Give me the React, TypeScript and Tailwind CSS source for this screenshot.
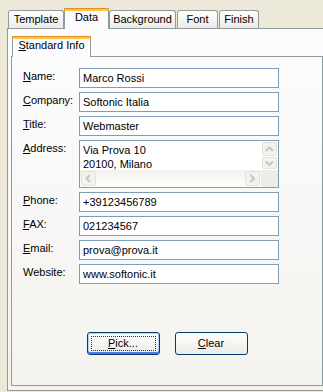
import { ReactNode } from 'react';

function Tab({ label, active, className }: { label: ReactNode; active?: boolean; className: string }) {
  if (active) {
    return (
      <div className={`relative z-10 -mb-px flex h-[21px] flex-col border-x border-[#919B9C] bg-[#FCFCFE] ${className}`}>
        <div className="-mx-px h-[3px] rounded-t-[3px] border-t border-[#E68B2C] bg-[#FFC73C]" />
        <div className="text-center leading-[13px]">{label}</div>
      </div>
    );
  }
  return (
    <div className={`flex h-[18px] items-center justify-center rounded-t-[3px] border border-b-0 border-[#919B9C] bg-linear-to-b from-white to-[#ECEBE6] ${className}`}>
      {label}
    </div>
  );
}

function Field({ label, value }: { label: ReactNode; value: string }) {
  return (
    <div className="flex">
      <div className="w-[56px] pt-[2px]">{label}</div>
      <div className="h-[20px] w-[200px] border border-[#7F9DB9] bg-white pl-[3px] pt-[3px]">{value}</div>
    </div>
  );
}

function Arrow({ dir }: { dir: 'up' | 'down' | 'left' | 'right' }) {
  const pts = {
    up: '1,5 4.5,1.5 8,5',
    down: '1,1.5 4.5,5 8,1.5',
    left: '5,1 1.5,4.5 5,8',
    right: '1.5,1 5,4.5 1.5,8',
  }[dir];
  const vertical = dir === 'up' || dir === 'down';
  return (
    <svg width={vertical ? 9 : 7} height={vertical ? 7 : 9} viewBox={vertical ? '0 0 9 7' : '0 0 7 9'}>
      <polyline points={pts} fill="none" stroke="#C4C6CB" strokeWidth="2" />
    </svg>
  );
}

function ScrollBtn({ dir, className }: { dir: 'up' | 'down' | 'left' | 'right'; className: string }) {
  return (
    <div className={`flex items-center justify-center rounded-[2px] border border-[#E4E2DA] bg-[#F3F2EC] ${className}`}>
      <Arrow dir={dir} />
    </div>
  );
}

function Key({ children }: { children: ReactNode }) {
  return <span className="underline underline-offset-[1px]">{children}</span>;
}

export default function App() {
  return (
    <div className="relative h-[392px] w-[323px] overflow-hidden bg-[#ECE9D8] font-['Liberation_Sans',Arial,sans-serif] text-[11px] leading-[13px] text-black">
      <div className="flex h-[28px] items-end pl-[8px]">
        <Tab label="Template" className="w-[56px]" />
        <Tab label="Data" active className="w-[45px]" />
        <Tab label="Background" className="w-[67px]" />
        <Tab label="Font" className="ml-[1px] w-[41px]" />
        <Tab label="Finish" className="ml-[1px] w-[40px]" />
      </div>

      <div className="ml-[7px] h-[363px] w-[330px] border border-[#919B9C] bg-linear-to-b from-[#FCFCFE] to-[#F4F3EE] pl-[3px] pt-[7px]">
        <div className="flex h-[20px] items-end pl-[1px]">
          <Tab label={<><Key>S</Key>tandard Info</>} active className="w-[79px]" />
        </div>

        <div className="flex h-[330px] w-[312px] flex-col border border-[#919B9C]">
          <div className="flex flex-col gap-[4px] pl-[11px] pt-[11px]">
            <Field label={<><Key>N</Key>ame:</>} value="Marco Rossi" />
            <Field label={<><Key>C</Key>ompany:</>} value="Softonic Italia" />
            <Field label={<><Key>T</Key>itle:</>} value="Webmaster" />

            <div className="flex">
              <div className="w-[56px] pt-[2px]"><Key>A</Key>ddress:</div>
              <div className="flex h-[48px] w-[200px] flex-col border border-[#7F9DB9] bg-white">
                <div className="flex h-[29px]">
                  <div className="flex-1 overflow-hidden pl-[3px] pt-[2px] leading-[14px]">
                    <div>Via Prova 10</div>
                    <div>20100, Milano</div>
                  </div>
                  <div className="flex w-[17px] flex-col gap-px p-px">
                    <ScrollBtn dir="up" className="h-[14px]" />
                    <ScrollBtn dir="down" className="h-[12px]" />
                  </div>
                </div>
                <div className="flex h-[17px]">
                  <div className="flex flex-1 justify-between bg-linear-to-b from-[#F3F2EC] to-[#FDFDFB] p-px">
                    <ScrollBtn dir="left" className="w-[15px]" />
                    <ScrollBtn dir="right" className="w-[15px]" />
                  </div>
                  <div className="w-[17px] bg-[#EEEDE5]" />
                </div>
              </div>
            </div>

            <Field label={<><Key>P</Key>hone:</>} value="+39123456789" />
            <Field label={<><Key>F</Key>AX:</>} value="021234567" />
            <Field label={<><Key>E</Key>mail:</>} value="prova@prova.it" />
            <Field label="Website:" value="www.softonic.it" />
          </div>

          <div className="mt-[48px] flex justify-center gap-[15px]">
            <button className="relative flex h-[23px] w-[73px] items-center justify-center rounded-[3px] border border-[#003C74] bg-linear-to-b from-white to-[#ECEBE6] shadow-[inset_0_-2px_0_#4B7BE0,inset_0_0_0_1px_#BCD1F7]">
              <span className="absolute inset-[3px] border border-dotted border-[#333]" />
              <span><Key>P</Key>ick...</span>
            </button>
            <button className="flex h-[23px] w-[73px] items-center justify-center rounded-[3px] border border-[#003C74] bg-linear-to-b from-white to-[#ECEBE6]">
              <span><Key>C</Key>lear</span>
            </button>
          </div>
        </div>
      </div>
    </div>
  );
}
